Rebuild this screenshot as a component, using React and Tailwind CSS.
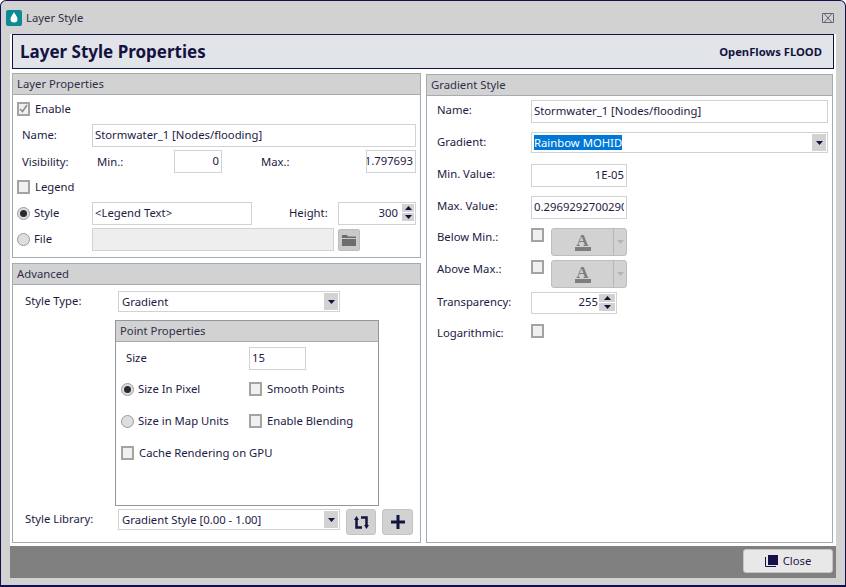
import React from "react";

const Caret = () => (
  <svg width="7" height="4" viewBox="0 0 7 4"><path d="M0 0h7L3.5 4z" fill="#14123f" /></svg>
);

const Check = ({ checked }) => (
  <span className="w-[13px] h-[14px] shrink-0 border-2 border-[#a3a3a3] bg-[#f0f0f0] flex items-center justify-center">
    {checked && (
      <svg width="9" height="9" viewBox="0 0 9 9"><path d="M1 5l2.500 2.500L8 1" fill="none" stroke="#8a8a8a" strokeWidth="1.500" /></svg>
    )}
  </span>
);

const Radio = ({ checked }) => (
  <span className="w-[13px] h-[13px] shrink-0 rounded-full border border-[#9a9a9a] bg-[#dedede] flex items-center justify-center">
    {checked && <span className="w-[7px] h-[7px] rounded-full bg-[#2a2a35]" />}
  </span>
);

const Input = ({ w, h = "h-[23px]", right, children, extra = "" }) => (
  <div className={`${w} ${h} shrink-0 border border-[#cfd3d6] bg-white flex items-center overflow-hidden whitespace-nowrap pl-[2px] pb-[2px] ${right ? "justify-end" : ""} ${extra || "pr-[2px]"}`}>
    {children}
  </div>
);

const Select = ({ w, children }) => (
  <div className={`${w} h-[21px] shrink-0 border border-[#cfd3d6] bg-white flex items-center pl-[3px] pr-[1px]`}>
    <span className="flex-1 whitespace-nowrap">{children}</span>
    <span className="w-[14px] h-[17px] bg-[#d2d2d2] flex items-center justify-center"><Caret /></span>
  </div>
);

const Spinner = ({ extra = "w-[12px]" }) => (
  <span className={`h-[17px] shrink-0 flex flex-col gap-px ${extra}`}>
    <span className="flex-1 bg-[#d2d2d2] flex items-center justify-center"><svg width="7" height="4" viewBox="0 0 7 4"><path d="M0 4h7L3.500 0z" fill="#14123f" /></svg></span>
    <span className="flex-1 bg-[#d2d2d2] flex items-center justify-center"><Caret /></span>
  </span>
);

const Header = ({ children }) => (
  <div className="h-[21px] shrink-0 bg-[#d2d2d2] border-b border-[#a3abb3] flex items-center pl-[4px] text-[#2f2f4a]">{children}</div>
);

const ColorButton = () => (
  <div className="w-[76px] h-[28px] shrink-0 ml-[7px] rounded-[3px] border border-[#bdbdbd] bg-[#d2d2d2] flex">
    <div className="w-[61px] flex flex-col items-center justify-center pt-[1px]">
      <span className="text-[17px] leading-[13px] font-bold text-[#7d7d7d] font-['Liberation_Serif',serif]">A</span>
      <span className="w-[16px] h-[4px] bg-[#7d7d7d]" />
    </div>
    <div className="flex-1 border-l border-[#b5b5b5] flex items-center justify-center">
      <svg width="7" height="4" viewBox="0 0 7 4"><path d="M0 0h7L3.500 4z" fill="#b5b5b5" /></svg>
    </div>
  </div>
);

const IconButton = ({ w, children, extra = "" }) => (
  <div className={`${w} h-[26px] shrink-0 rounded-[3px] border border-[#c4c4c4] bg-[#d2d2d2] flex items-center justify-center ${extra}`}>{children}</div>
);

export default function App() {
  return (
    <div className="w-[846px] h-[587px] overflow-hidden rounded-t-[6px] border border-b-2 border-[#14104a] bg-[#d2d2d2] flex flex-col text-[11.3px] leading-[16px] text-[#1c1a45] font-['Noto_Sans',sans-serif]">
      {/* title bar */}
      <div className="h-[33px] shrink-0 flex items-center pl-[5px] pr-[11px]">
        <span className="w-[16px] h-[16px] rounded-[2px] bg-[#0e8a94] flex items-center justify-center">
          <svg width="8" height="11" viewBox="0 0 8 11"><path d="M4 0C3 2.500 0.500 4.500 0.500 7a3.500 3.500 0 0 0 7 0C7.500 4.500 5 2.500 4 0z" fill="#fff" /></svg>
        </span>
        <span className="ml-[4px] text-[#2f2f4a]">Layer Style</span>
        <svg className="ml-auto" width="12" height="10" viewBox="0 0 12 10"><path d="M.5.500h11v9H.5zM2.500 1l7 8M9.500 1l-7 8" fill="none" stroke="#5f6873" strokeWidth="1" /></svg>
      </div>

      {/* content */}
      <div className="flex-1 mx-[9px] flex flex-col bg-white min-h-0">
        <div className="mx-[2px] h-[35px] shrink-0 border border-[#14104a] bg-[#e1e5e9] flex items-center justify-between pl-[7px] pr-[11px]">
          <span className="text-[17px] font-bold text-[#14123f] mt-[1px]">Layer Style Properties</span>
          <span className="text-[11.25px] font-bold text-[#14123f]">OpenFlows FLOOD</span>
        </div>

        <div className="flex-1 flex pl-[2px] pr-[3px] pt-[4px] gap-[5px] min-h-0 pb-[3px]">
          {/* left column */}
          <div className="w-[409px] flex flex-col">
            <section className="h-[185px] shrink-0 border border-[#a3abb3] flex flex-col">
              <Header>Layer Properties</Header>
              <div className="flex items-center gap-[5px] pl-[4px] mt-[6px] h-[15px]"><Check checked />Enable</div>
              <div className="flex items-center mt-[8px] pl-[9px]">
                <span className="w-[70px] mb-[2px]">Name:</span>
                <Input w="w-[324px]">Stormwater_1 [Nodes/flooding]</Input>
              </div>
              <div className="flex items-center mt-[3px] pl-[9px]">
                <span className="w-[75px]">Visibility:</span>
                <span className="w-[77px]">Min.:</span>
                <Input w="w-[48px]" right>0</Input>
                <span className="w-[144px] pl-[39px]">Max.:</span>
                <Input w="w-[50px]" right>1.797693</Input>
              </div>
              <div className="flex items-center gap-[5px] pl-[4px] mt-[7px] h-[14px]"><Check />Legend</div>
              <div className="flex items-center mt-[8px] pl-[4px]">
                <Radio checked />
                <span className="w-[62px] pl-[4px] mb-[2px]">Style</span>
                <Input w="w-[160px]">&lt;Legend Text&gt;</Input>
                <span className="w-[86px] pl-[37px] mb-[2px]">Height:</span>
                <Input w="w-[78px]" right extra="pr-[1px]">300<Spinner extra="w-[12px] ml-[4px]" /></Input>
              </div>
              <div className="flex items-center mt-[3px] pl-[4px]">
                <Radio />
                <span className="w-[62px] pl-[4px] mb-[2px]">File</span>
                <div className="w-[242px] h-[23px] border border-[#cfd3d6] bg-[#eeeeee]" />
                <div className="w-[22px] h-[22px] ml-[4px] rounded-[2px] bg-[#c9c9c9] border border-[#bdbdbd] flex items-center justify-center">
                  <svg width="14" height="12" viewBox="0 0 14 12"><path d="M0 1h5l1 1.500h8V4H0z M0 5h14v7H0z" fill="#6d6d6d" /></svg>
                </div>
              </div>
            </section>

            <section className="flex-1 mt-[5px] border border-[#a3abb3] flex flex-col min-h-0">
              <Header>Advanced</Header>
              <div className="flex items-center mt-[6px] pl-[12px]">
                <span className="w-[93px] mb-[2px]">Style Type:</span>
                <Select w="w-[222px]">Gradient</Select>
              </div>
              <div className="ml-[102px] mt-[8px] w-[264px] h-[186px] shrink-0 border border-[#8f979f] flex flex-col">
                <Header>Point Properties</Header>
                <div className="flex items-center mt-[5px] pl-[10px]">
                  <span className="w-[123px] mb-[2px]">Size</span>
                  <Input w="w-[57px]">15</Input>
                </div>
                <div className="flex items-center mt-[12px] h-[14px] pl-[5px]">
                  <span className="w-[128px] flex items-center gap-[4px]"><Radio checked />Size In Pixel</span>
                  <span className="flex items-center gap-[5px]"><Check />Smooth Points</span>
                </div>
                <div className="flex items-center mt-[18px] h-[14px] pl-[5px]">
                  <span className="w-[128px] flex items-center gap-[4px] whitespace-nowrap"><Radio />Size in Map Units</span>
                  <span className="flex items-center gap-[5px]"><Check />Enable Blending</span>
                </div>
                <div className="flex items-center gap-[5px] mt-[18px] h-[14px] pl-[5px]"><Check />Cache Rendering on GPU</div>
              </div>
              <div className="flex items-start mt-[3px] pl-[12px]">
                <span className="w-[93px] mt-[2px]">Style Library:</span>
                <Select w="w-[222px]">Gradient Style [0.00 - 1.00]</Select>
                <IconButton w="w-[30px]" extra="ml-[6px]">
                  <svg width="15" height="15" viewBox="0 0 15 15" fill="none" stroke="#14123f" strokeWidth="2.500">
                    <path d="M2.500 4v8.500H8" />
                    <path d="M12.500 11V2.500H7" />
                    <path d="M0 5l2.500-4L5 5zM10 10l2.500 4 2.500-4z" fill="#14123f" stroke="none" />
                  </svg>
                </IconButton>
                <IconButton w="w-[31px]" extra="ml-[6px]">
                  <svg width="14" height="14" viewBox="0 0 14 14"><path d="M5.500 0h3v5.500H14v3H8.500V14h-3V8.500H0v-3h5.500z" fill="#14123f" /></svg>
                </IconButton>
              </div>
            </section>
          </div>

          {/* right column */}
          <section className="w-[407px] mt-[1px] border border-[#a3abb3] flex flex-col">
            <Header>Gradient Style</Header>
            <div className="flex items-center mt-[4px] pl-[10px]">
              <span className="w-[94px] mb-[4px]">Name:</span>
              <Input w="w-[297px]">Stormwater_1 [Nodes/flooding]</Input>
            </div>
            <div className="flex items-center mt-[9px] pl-[10px]">
              <span className="w-[94px] mb-[2px]">Gradient:</span>
              <div className="w-[297px] h-[21px] border border-[#cfd3d6] bg-white flex items-center pl-[2px] pr-[1px]">
                <span className="flex-1"><span className="bg-[#0078d7] text-white">Rainbow MOHID</span></span>
                <span className="w-[14px] h-[17px] bg-[#d2d2d2] flex items-center justify-center"><Caret /></span>
              </div>
            </div>
            <div className="flex items-center mt-[11px] pl-[10px]">
              <span className="w-[94px] mb-[4px]">Min. Value:</span>
              <Input w="w-[96px]" right>1E-05</Input>
            </div>
            <div className="flex items-center mt-[9px] pl-[10px]">
              <span className="w-[94px] mb-[4px]">Max. Value:</span>
              <Input w="w-[96px]"><span className="flex-1 overflow-hidden">0.296929270029060</span></Input>
            </div>
            <div className="flex items-start mt-[9px] pl-[10px]">
              <span className="w-[94px] mt-[1px]">Below Min.:</span>
              <Check /><ColorButton />
            </div>
            <div className="flex items-start mt-[4px] pl-[10px]">
              <span className="w-[94px] mt-[1px]">Above Max.:</span>
              <Check /><ColorButton />
            </div>
            <div className="flex items-center mt-[4px] pl-[10px]">
              <span className="w-[94px] mb-[2px]">Transparency:</span>
              <Input w="w-[86px]" h="h-[22px]" right extra="pr-[1px]">255<Spinner extra="w-[16px] ml-[1px]" /></Input>
            </div>
            <div className="flex items-start mt-[10px] pl-[10px]">
              <span className="w-[94px] mt-[1px]">Logarithmic:</span>
              <Check />
            </div>
          </section>
        </div>

        {/* footer */}
        <div className="h-[32px] shrink-0 bg-[#808080] flex items-start justify-end pt-[3px] pr-[3px]">
          <div className="w-[90px] h-[24px] rounded-[3px] border border-[#c4c4c4] bg-[#e8e8e8] flex items-center justify-center gap-[5px]">
            <svg width="13" height="12" viewBox="0 0 13 12"><path d="M3 0h10v10H3z" fill="#14104a" /><path d="M.5 2v9.500H11" fill="none" stroke="#14104a" /></svg>
            <span>Close</span>
          </div>
        </div>
      </div>
      <div className="h-[7px] shrink-0" />
    </div>
  );
}
